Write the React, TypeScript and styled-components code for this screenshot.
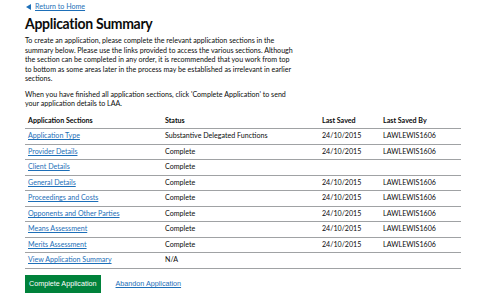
import React from 'react';
import styled, { createGlobalStyle } from 'styled-components';

const GlobalStyle = createGlobalStyle`
  html, body {
    margin: 0;
    padding: 0;
    background: #ffffff;
  }
  body {
    font-family: Lato, "Open Sans", sans-serif;
    color: #0b0c0c;
  }
`;

const Page = styled.main`
  width: 436px;
  padding: 3px 0 0 25px;
  font-size: 7.1px;
`;

const BackLink = styled.a`
  display: flex;
  width: fit-content;
  align-items: center;
  gap: 4px;
  font-size: 7.1px;
  line-height: 8px;
  color: #1d6fb8;
  text-decoration: underline;
  &::before {
    content: '';
    width: 0;
    height: 0;
    border-top: 3px solid transparent;
    border-bottom: 3px solid transparent;
    border-right: 5px solid #1d6fb8;
    margin-left: 1px;
  }
`;

const Heading = styled.h1`
  margin: 2px 0 3px;
  font-size: 14px;
  line-height: 20px;
  letter-spacing: -0.3px;
  font-weight: 700;
  transform: scaleY(1.12);
  transform-origin: left center;
`;

const Intro = styled.p`
  width: 268px;
  margin: 0 0 6px;
  font-size: 7.1px;
  line-height: 9.5px;
`;

const Table = styled.table`
  width: 436px;
  border-collapse: collapse;
  table-layout: fixed;
  font-size: 7.1px;
`;

const HeadCell = styled.th<{ $w: number }>`
  box-sizing: border-box;
  width: ${(p) => p.$w}px;
  height: 14px;
  padding: 0 3px;
  line-height: 8px;
  text-align: left;
  font-weight: 700;
  border-bottom: 1px solid #a0a2a4;
`;

const Cell = styled.td`
  box-sizing: border-box;
  height: 15.5px;
  padding: 0 3px;
  line-height: 8px;
  white-space: nowrap;
  border-bottom: 1px solid #a0a2a4;
`;

const CellLink = styled.a`
  color: #1d6fb8;
  text-decoration: underline;
`;

const Actions = styled.div`
  display: flex;
  align-items: center;
  gap: 15px;
  margin-top: 6px;
`;

const PrimaryButton = styled.button`
  height: 18px;
  padding: 0 4px;
  border: none;
  border-radius: 0;
  background: #00823b;
  box-shadow: 0 1px 0 #003618;
  color: #ffffff;
  font-family: "Liberation Sans", Arial, sans-serif;
  font-size: 7.2px;
`;

const SecondaryLink = styled.a`
  color: #1d6fb8;
  font-family: "Liberation Sans", Arial, sans-serif;
  font-size: 7.2px;
  text-decoration: underline;
`;

const rows = [
  ['Application Type', 'Substantive Delegated Functions', '24/10/2015', 'LAWLEWIS1606'],
  ['Provider Details', 'Complete', '24/10/2015', 'LAWLEWIS1606'],
  ['Client Details', 'Complete', '', ''],
  ['General Details', 'Complete', '24/10/2015', 'LAWLEWIS1606'],
  ['Proceedings and Costs', 'Complete', '24/10/2015', 'LAWLEWIS1606'],
  ['Opponents and Other Parties', 'Complete', '24/10/2015', 'LAWLEWIS1606'],
  ['Means Assessment', 'Complete', '24/10/2015', 'LAWLEWIS1606'],
  ['Merits Assessment', 'Complete', '24/10/2015', 'LAWLEWIS1606'],
  ['View Application Summary', 'N/A', '', ''],
];

export default function App() {
  return (
    <>
      <GlobalStyle />
      <Page>
        <BackLink href="#">Return to Home</BackLink>
        <Heading>Application Summary</Heading>
        <Intro>
          To create an application, please complete the relevant application sections in the
          summary below. Please use the links provided to access the various sections. Although
          the section can be completed in any order, it is recommended that you work from top
          to bottom as some areas later in the process may be established as irrelevant in earlier
          sections.
        </Intro>
        <Intro>
          When you have finished all application sections, click 'Complete Application' to send
          your application details to LAA.
        </Intro>
        <Table>
          <thead>
            <tr>
              <HeadCell $w={137}>Application Sections</HeadCell>
              <HeadCell $w={157}>Status</HeadCell>
              <HeadCell $w={61}>Last Saved</HeadCell>
              <HeadCell $w={81}>Last Saved By</HeadCell>
            </tr>
          </thead>
          <tbody>
            {rows.map(([section, status, saved, by]) => (
              <tr key={section}>
                <Cell>
                  <CellLink href="#">{section}</CellLink>
                </Cell>
                <Cell>{status}</Cell>
                <Cell>{saved}</Cell>
                <Cell>{by}</Cell>
              </tr>
            ))}
          </tbody>
        </Table>
        <Actions>
          <PrimaryButton type="button">Complete Application</PrimaryButton>
          <SecondaryLink href="#">Abandon Application</SecondaryLink>
        </Actions>
      </Page>
    </>
  );
}
